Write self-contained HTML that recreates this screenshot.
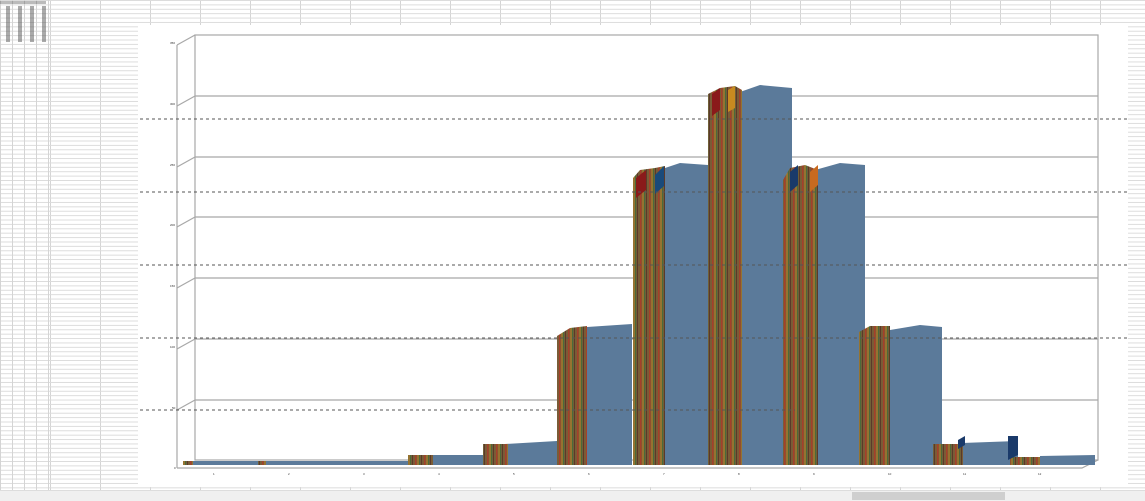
<!DOCTYPE html>
<html><head><style>
html,body{margin:0;padding:0;width:1145px;height:500px;overflow:hidden;background:#fff;font-family:"Liberation Sans",sans-serif;}
.grid{position:absolute;left:0;top:0;width:1145px;height:490px;
background-image:linear-gradient(#dcdcdc 1px,transparent 1px),linear-gradient(90deg,#d4d4d4 1px,transparent 1px);
background-size:50px 4.4px,50px 4.4px;}
.grid2{position:absolute;left:0;top:0;width:50px;height:490px;background-image:linear-gradient(90deg,#d4d4d4 1px,transparent 1px);background-size:12px 4px;}
.sb{position:absolute;left:0;top:490px;width:1145px;height:10px;background:#f0f0f0;border-top:1px solid #ddd;}
.th{position:absolute;left:852px;top:492px;width:153px;height:8px;background:#cfcfcf;}
.chart{position:absolute;left:138px;top:25px;width:990px;height:462px;background:#fff;}
</style></head><body>
<div class="grid"></div><div class="grid2"></div>
<div class="chart"></div>
<svg style="position:absolute;left:0;top:0" width="1145" height="500">
<defs>
<pattern id="st" width="9" height="10" patternUnits="userSpaceOnUse">
<rect width="9" height="10" fill="#7a5c36"/>
<rect x="1" width="1.5" height="10" fill="#a5402a"/>
<rect x="3.5" width="1" height="10" fill="#b08a2a"/>
<rect x="5" width="1.2" height="10" fill="#4a6a3a"/>
<rect x="7" width="1" height="10" fill="#5a3a2a"/>
</pattern>
</defs>
<g fill="#333">
<rect x="6" y="6" width="4" height="36" fill="#555" opacity="0.5"/>
<rect x="18" y="6" width="4" height="36" fill="#555" opacity="0.5"/>
<rect x="30" y="6" width="4" height="36" fill="#555" opacity="0.5"/>
<rect x="42" y="6" width="4" height="36" fill="#555" opacity="0.5"/>
<rect x="0" y="1" width="46" height="3" fill="#555" opacity="0.4"/>
</g>
<g stroke="#a8a8a8" stroke-width="1.2" fill="none">
<rect x="195" y="35" width="903" height="425"/>
<line x1="195" y1="96" x2="1098" y2="96"/><line x1="195" y1="157" x2="1098" y2="157"/>
<line x1="195" y1="217" x2="1098" y2="217"/><line x1="195" y1="278" x2="1098" y2="278"/>
<line x1="195" y1="339" x2="1098" y2="339"/><line x1="195" y1="400" x2="1098" y2="400"/>
<line x1="177" y1="45" x2="195" y2="35"/><line x1="177" y1="106" x2="195" y2="96"/>
<line x1="177" y1="167" x2="195" y2="157"/><line x1="177" y1="227" x2="195" y2="217"/>
<line x1="177" y1="288" x2="195" y2="278"/><line x1="177" y1="349" x2="195" y2="339"/>
<line x1="177" y1="410" x2="195" y2="400"/>
<line x1="177" y1="45" x2="177" y2="468"/>
<polyline points="177,468 1082,468 1098,460"/>
</g>
<g font-size="3" fill="#333">
<text x="170" y="44">350</text><text x="170" y="105">300</text><text x="170" y="166">250</text><text x="170" y="226">200</text><text x="170" y="287">150</text><text x="170" y="348">100</text><text x="172" y="409">50</text><text x="174" y="469">0</text>
</g>
<g fill="#5b7a9a">
<rect x="183" y="461" width="80" height="4"/><rect x="258" y="461" width="75" height="4"/><rect x="333" y="461" width="75" height="4"/>
<rect x="430" y="455" width="55" height="10"/>
<polygon points="505,444 557,441 557,465 505,465"/>
<polygon points="587,327 632,324 632,465 587,465"/>
<polygon points="665,168 680,163 708,165 708,465 665,465"/>
<polygon points="740,92 760,85 792,88 792,465 740,465"/>
<polygon points="815,170 840,163 865,165 865,465 815,465"/>
<polygon points="890,330 920,325 942,327 942,465 890,465"/>
<polygon points="962,443 1018,441 1018,465 962,465"/>
<polygon points="1040,456 1095,455 1095,465 1040,465"/>
</g>
<g fill="url(#st)">
<rect x="183" y="461" width="10" height="4"/><rect x="258" y="461" width="8" height="4"/>
<rect x="408" y="455" width="25" height="10"/>
<rect x="483" y="444" width="25" height="21"/>
<polygon points="557,336 570,328 587,326 587,465 557,465"/>
<polygon points="633,178 640,170 655,168 665,166 665,465 633,465"/>
<polygon points="708,94 720,88 735,86 742,90 742,465 708,465"/>
<polygon points="783,180 790,168 805,165 818,170 818,465 783,465"/>
<polygon points="859,332 870,326 890,326 890,465 859,465"/>
<rect x="933" y="444" width="30" height="21"/>
<rect x="1010" y="457" width="30" height="8"/>
</g>
<g>
<polygon points="636,178 646,170 646,190 636,198" fill="#8a1a1a"/>
<polygon points="655,175 664,166 664,186 655,194" fill="#1a4a7a"/>
<polygon points="712,94 720,88 720,110 712,116" fill="#8a1a1a"/>
<polygon points="728,90 735,86 735,108 728,112" fill="#c88a20"/>
<polygon points="790,172 798,165 798,185 790,192" fill="#1a3a6a"/>
<polygon points="810,172 818,165 818,185 810,192" fill="#c86a20"/>
<polygon points="1008,436 1018,436 1018,455 1008,460" fill="#1a3a6a"/>
<polygon points="958,440 965,436 965,445 958,449" fill="#1a3a6a"/>
</g>
<g stroke="#555" stroke-width="1" stroke-dasharray="3,3">
<line x1="140" y1="119" x2="1130" y2="119"/>
<line x1="140" y1="192" x2="1130" y2="192"/>
<line x1="140" y1="265" x2="1130" y2="265"/>
<line x1="140" y1="338" x2="1130" y2="338"/>
<line x1="140" y1="410" x2="795" y2="410"/>
</g>
<g font-size="3" fill="#333">
<text x="213" y="475">1</text><text x="288" y="475">2</text><text x="363" y="475">3</text><text x="438" y="475">4</text><text x="513" y="475">5</text><text x="588" y="475">6</text><text x="663" y="475">7</text><text x="738" y="475">8</text><text x="813" y="475">9</text><text x="888" y="475">10</text><text x="963" y="475">11</text><text x="1038" y="475">12</text>
</g>
</svg>
<div class="sb"></div><div class="th"></div>
</body></html>
